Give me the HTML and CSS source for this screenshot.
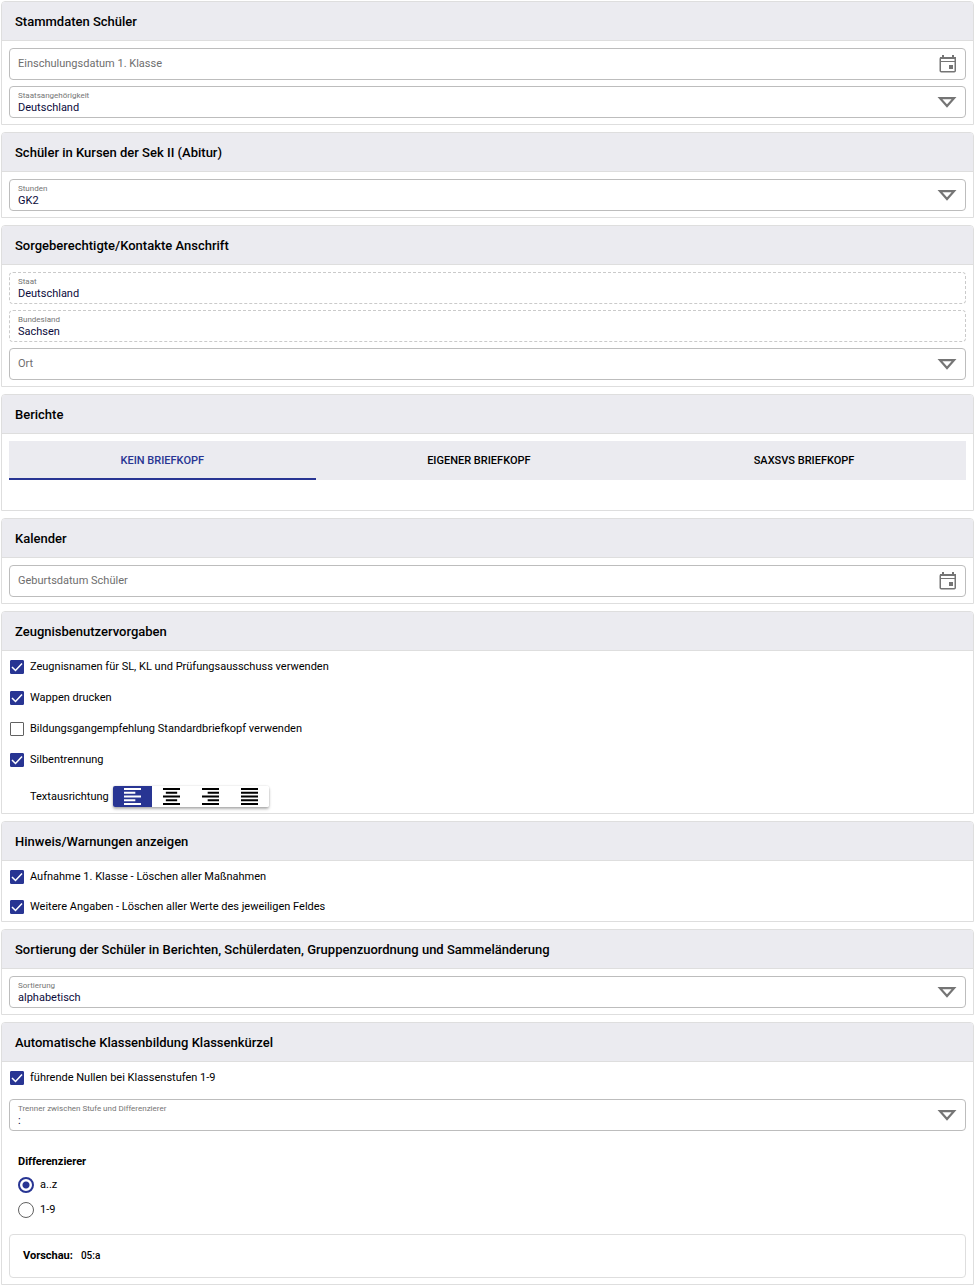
FILE: index.html
```html
<!DOCTYPE html>
<html lang="de">
<head>
<meta charset="utf-8">
<meta name="viewport" content="width=device-width, initial-scale=1">
<title>Einstellungen</title>
<link rel="stylesheet" href="styles.css">
</head>
<body>
<svg class="sprite" aria-hidden="true">
  <symbol id="calendar" viewBox="0 0 18 18"><rect x="1.250" y="2.750" width="15" height="14" rx="1" fill="none" stroke="currentColor" stroke-width="1.500"/><path fill="currentColor" d="M3 0h2v3H3zM13 0h2v3h-2zM1 2h16v2H1zM2 6h14v1H2zM10 10h4v4h-4z"/></symbol>
  <symbol id="arrow" viewBox="0 0 20 12"><path fill="none" stroke="currentColor" stroke-width="2.200" d="M3 2.200h14L10 10z"/></symbol>
</svg>
<main class="page">
  <section class="card">
    <h2 class="card-title">Stammdaten Schüler</h2>
    <div class="card-body">
      <div class="field">
        <input class="value placeholder" type="text" aria-label="Einschulungsdatum 1. Klasse" placeholder="Einschulungsdatum 1. Klasse">
        <button class="icon-button" type="button" aria-label="Kalender öffnen"><svg class="calendar"><use href="#calendar"/></svg></button>
      </div>
      <div class="field">
        <div class="field-main">
          <label class="field-label" for="nation">Staatsangehörigkeit</label>
          <select class="value" id="nation"><option>Deutschland</option></select>
        </div>
        <svg class="arrow" aria-hidden="true"><use href="#arrow"/></svg>
      </div>
    </div>
  </section>

  <section class="card">
    <h2 class="card-title">Schüler in Kursen der Sek II (Abitur)</h2>
    <div class="card-body">
      <div class="field">
        <div class="field-main">
          <label class="field-label" for="hours">Stunden</label>
          <select class="value" id="hours"><option>GK2</option></select>
        </div>
        <svg class="arrow" aria-hidden="true"><use href="#arrow"/></svg>
      </div>
    </div>
  </section>

  <section class="card">
    <h2 class="card-title">Sorgeberechtigte/Kontakte Anschrift</h2>
    <div class="card-body">
      <div class="field field-locked">
        <div class="field-main">
          <label class="field-label" for="state">Staat</label>
          <input class="value" id="state" type="text" value="Deutschland" readonly>
        </div>
      </div>
      <div class="field field-locked">
        <div class="field-main">
          <label class="field-label" for="region">Bundesland</label>
          <input class="value" id="region" type="text" value="Sachsen" readonly>
        </div>
      </div>
      <div class="field">
        <select class="value placeholder" aria-label="Ort"><option>Ort</option></select>
        <svg class="arrow" aria-hidden="true"><use href="#arrow"/></svg>
      </div>
    </div>
  </section>

  <section class="card">
    <h2 class="card-title">Berichte</h2>
    <div class="card-body">
      <div class="tabs" role="tablist">
        <button class="tab tab-active" type="button" role="tab" aria-selected="true">KEIN BRIEFKOPF</button>
        <button class="tab" type="button" role="tab" aria-selected="false">EIGENER BRIEFKOPF</button>
        <button class="tab" type="button" role="tab" aria-selected="false">SAXSVS BRIEFKOPF</button>
      </div>
      <div class="tab-panel" role="tabpanel"></div>
    </div>
  </section>

  <section class="card">
    <h2 class="card-title">Kalender</h2>
    <div class="card-body">
      <div class="field">
        <input class="value placeholder" type="text" aria-label="Geburtsdatum Schüler" placeholder="Geburtsdatum Schüler">
        <button class="icon-button" type="button" aria-label="Kalender öffnen"><svg class="calendar"><use href="#calendar"/></svg></button>
      </div>
    </div>
  </section>

  <section class="card">
    <h2 class="card-title">Zeugnisbenutzervorgaben</h2>
    <div class="checks">
      <label class="check"><input type="checkbox" checked>Zeugnisnamen für SL, KL und Prüfungsausschuss verwenden</label>
      <label class="check"><input type="checkbox" checked>Wappen drucken</label>
      <label class="check"><input type="checkbox">Bildungsgangempfehlung Standardbriefkopf verwenden</label>
      <label class="check"><input type="checkbox" checked>Silbentrennung</label>
    </div>
    <div class="align-row">
      <span id="align-label">Textausrichtung</span>
      <div class="toggle-group" role="group" aria-labelledby="align-label">
        <button class="toggle toggle-active" type="button" aria-pressed="true" aria-label="Linksbündig"><svg class="align-icon" viewBox="0 0 18 18"><path d="M0 1h18M0 5h12M0 9h18M0 13h12M0 17h18"/></svg></button>
        <button class="toggle" type="button" aria-pressed="false" aria-label="Zentriert"><svg class="align-icon" viewBox="0 0 18 18"><path d="M0 1h18M3 5h12M0 9h18M3 13h12M0 17h18"/></svg></button>
        <button class="toggle" type="button" aria-pressed="false" aria-label="Rechtsbündig"><svg class="align-icon" viewBox="0 0 18 18"><path d="M0 1h18M6 5h12M0 9h18M6 13h12M0 17h18"/></svg></button>
        <button class="toggle" type="button" aria-pressed="false" aria-label="Blocksatz"><svg class="align-icon" viewBox="0 0 18 18"><path d="M0 1h18M0 5h18M0 9h18M0 13h18M0 17h18"/></svg></button>
      </div>
    </div>
  </section>

  <section class="card">
    <h2 class="card-title">Hinweis/Warnungen anzeigen</h2>
    <div class="checks checks-compact">
      <label class="check"><input type="checkbox" checked>Aufnahme 1. Klasse - Löschen aller Maßnahmen</label>
      <label class="check"><input type="checkbox" checked>Weitere Angaben - Löschen aller Werte des jeweiligen Feldes</label>
    </div>
  </section>

  <section class="card">
    <h2 class="card-title">Sortierung der Schüler in Berichten, Schülerdaten, Gruppenzuordnung und Sammeländerung</h2>
    <div class="card-body">
      <div class="field">
        <div class="field-main">
          <label class="field-label" for="sorting">Sortierung</label>
          <select class="value" id="sorting"><option>alphabetisch</option></select>
        </div>
        <svg class="arrow" aria-hidden="true"><use href="#arrow"/></svg>
      </div>
    </div>
  </section>

  <section class="card">
    <h2 class="card-title">Automatische Klassenbildung Klassenkürzel</h2>
    <div class="checks">
      <label class="check"><input type="checkbox" checked>führende Nullen bei Klassenstufen 1-9</label>
    </div>
    <div class="card-body">
      <div class="field">
        <div class="field-main">
          <label class="field-label" for="separator">Trenner zwischen Stufe und Differenzierer</label>
          <select class="value" id="separator"><option>:</option></select>
        </div>
        <svg class="arrow" aria-hidden="true"><use href="#arrow"/></svg>
      </div>
      <fieldset class="radios">
        <legend>Differenzierer</legend>
        <label class="radio"><input type="radio" name="diff" checked>a..z</label>
        <label class="radio"><input type="radio" name="diff">1-9</label>
      </fieldset>
      <div class="preview"><strong>Vorschau:</strong><output class="preview-value">05:a</output></div>
    </div>
  </section>
</main>
</body>
</html>
```
FILE: styles.css
```css
* { box-sizing: border-box; }

body {
  margin: 0;
  background: #fff;
  color: #000;
  font: 11px/14px Roboto, sans-serif;
}

input, select, button { font: inherit; color: inherit; margin: 0; }

.sprite { display: none; }

.page {
  display: flex;
  flex-direction: column;
  gap: 7px;
  padding: 1px;
}

.card {
  border: 1px solid #dedede;
  border-radius: 4px 4px 0 0;
}

.card-title {
  margin: 0;
  padding: 11px 13px 9px;
  border-bottom: 1px solid #dedede;
  border-radius: 3px 3px 0 0;
  background: #ebebf0;
  font-size: 13px;
  font-weight: 500;
  line-height: 18px;
}

.card-body {
  display: flex;
  flex-direction: column;
  gap: 6px;
  padding: 7px 7px 6px;
}

.checks + .card-body { padding-top: 6px; }

.field {
  display: flex;
  align-items: center;
  height: 32px;
  padding: 0 8px;
  border: 1px solid #bdbdbd;
  border-radius: 4px;
}

.field-locked { border-style: dashed; border-color: #cacaca; }

.field-main {
  display: flex;
  flex: 1;
  flex-direction: column;
  padding-top: 2px;
}

.field-label {
  color: #757575;
  font-size: 8px;
  line-height: 10px;
}

.value {
  flex: 1;
  width: 100%;
  min-width: 0;
  height: 14px;
  padding: 0;
  border: 0;
  outline: 0;
  background: none;
  color: #0b0b3b;
  line-height: 14px;
  appearance: none;
}

.field-main .value { flex: none; }

.placeholder, .placeholder::placeholder { color: #6e6e6e; opacity: 1; }

.icon-button {
  display: flex;
  padding: 0;
  border: 0;
  background: none;
}

.calendar { width: 18px; height: 18px; color: #757575; }

.arrow { width: 20px; height: 12px; color: #757575; }

.tabs { display: flex; background: #ebebf0; }

.tab {
  flex: 1 1 auto;
  height: 39px;
  padding: 2px 0 0;
  border: 0;
  border-bottom: 2px solid transparent;
  background: none;
  font-weight: 500;
}

.tab-active { border-color: #283593; color: #283593; }

.tab-panel { height: 18px; }

.checks { display: flex; flex-direction: column; gap: 1px; padding: 1px 8px 0; }

.check { display: flex; align-items: center; gap: 6px; height: 30px; }

.checks-compact .check { height: 29px; }

.check input {
  width: 14px;
  height: 14px;
  border: 1px solid #616161;
  border-radius: 1px;
  appearance: none;
}

.check input:checked {
  border-color: #283593;
  background: #283593 url("data:image/svg+xml,%3Csvg xmlns='http://www.w3.org/2000/svg' viewBox='0 0 12 12'%3E%3Cpath d='M1 6l3.500 3.500L11 2.500' fill='none' stroke='white' stroke-width='1.500'/%3E%3C/svg%3E") center / 12px 12px;
}

.align-row {
  display: flex;
  align-items: center;
  gap: 4px;
  padding: 11px 28px 6px;
}

.toggle-group {
  display: flex;
  border-radius: 2px;
  box-shadow: 0 2px 3px rgba(0, 0, 0, .3), 0 0 2px rgba(0, 0, 0, .15);
}

.toggle {
  display: flex;
  align-items: center;
  justify-content: center;
  width: 39px;
  height: 21px;
  padding: 0;
  border: 0;
  background: #fff;
}

.toggle:last-child { border-radius: 0 2px 2px 0; }

.toggle-active { border-radius: 2px 0 0 2px; background: #283593; color: #fff; }

.align-icon { width: 17px; height: 17px; stroke: currentColor; stroke-width: 2; }

.radios { margin: 15px 0 6px; padding: 0 9px; border: 0; }

.radios legend { padding: 0; font-weight: 700; line-height: 20px; }

.radio { display: flex; align-items: center; gap: 6px; height: 25px; }

.radio input {
  width: 16px;
  height: 16px;
  border: 1px solid #616161;
  border-radius: 50%;
  appearance: none;
}

.radio input:checked {
  border: 2px solid #283593;
  background: radial-gradient(circle, #283593 3px, transparent 4px);
}

.preview {
  display: flex;
  align-items: center;
  gap: 8px;
  height: 44px;
  padding: 0 13px;
  border: 1px solid #dedede;
  border-radius: 4px;
}

.preview-value { font-size: 10px; font-weight: 500; }
```
